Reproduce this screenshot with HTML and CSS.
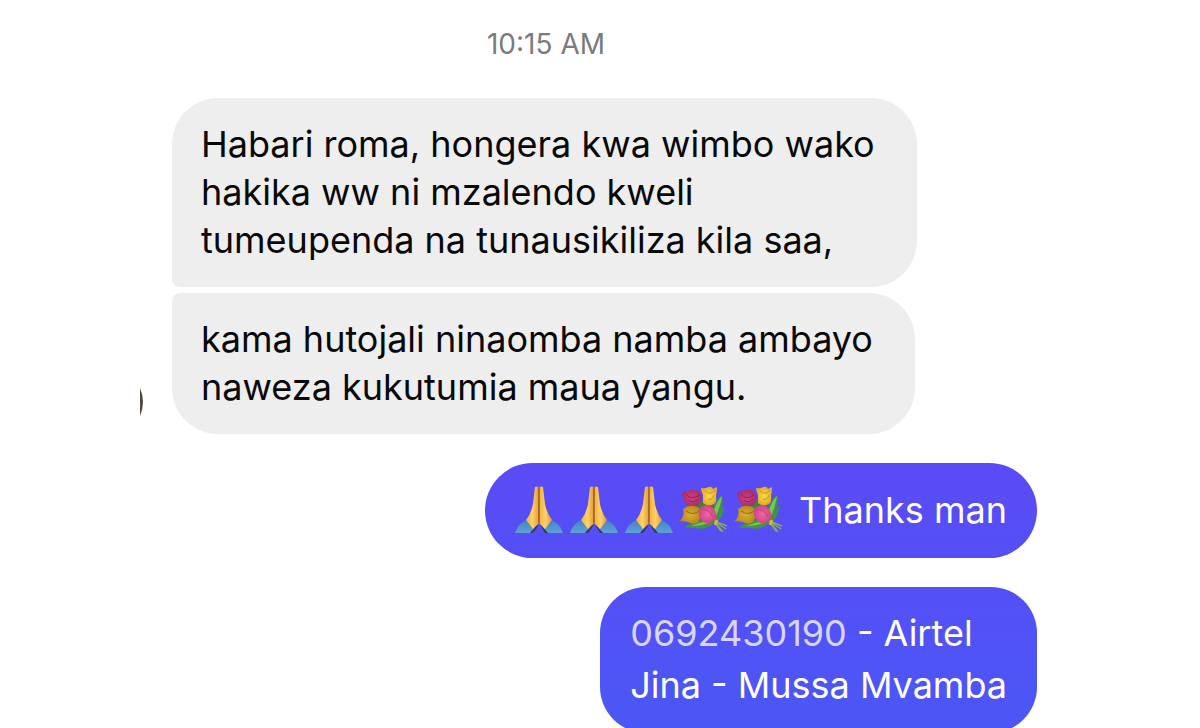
FILE: index.html
```html
<!DOCTYPE html>
<html lang="sw">
<head>
  <meta charset="UTF-8">
  <meta name="viewport" content="width=device-width, initial-scale=1.0">
  <title>Messages</title>
  <link rel="stylesheet" href="styles.css">
</head>
<body>
  <!-- Emoji artwork, reused in the messages -->
  <svg class="defs" aria-hidden="true">
    <defs>
      <linearGradient id="skin" x1="0" x2="1" y1="0" y2="0">
        <stop offset="0" stop-color="#f0ae3e"/>
        <stop offset="0.5" stop-color="#ffd165"/>
        <stop offset="1" stop-color="#e09a38"/>
      </linearGradient>
      <linearGradient id="sleeve" x1="0" x2="0" y1="0" y2="1">
        <stop offset="0" stop-color="#4583c4"/>
        <stop offset="1" stop-color="#5fa0d8"/>
      </linearGradient>
      <radialGradient id="magenta"><stop offset="0" stop-color="#cf4282"/><stop offset="1" stop-color="#a82c6c"/></radialGradient>
      <radialGradient id="pink"><stop offset="0" stop-color="#ec68a4"/><stop offset="1" stop-color="#d14583"/></radialGradient>
      <radialGradient id="yellow"><stop offset="0" stop-color="#fbdc46"/><stop offset="1" stop-color="#e2ac28"/></radialGradient>
      <radialGradient id="gold"><stop offset="0" stop-color="#dfae2c"/><stop offset="1" stop-color="#b88a22"/></radialGradient>
      <symbol id="pray" viewBox="0 0 48 48">
        <path fill="url(#sleeve)" d="M0 47Q3 37 12 34L21 41Q17 44 15 47Z"/>
        <path fill="url(#sleeve)" d="M48 47Q45 37 36 34L27 41Q31 44 33 47Z"/>
        <path fill="#303d69" d="M15 47L21 40L24 39L18 47ZM33 47L27 40L25 39L30 47Z"/>
        <path fill="url(#skin)" d="M20 1Q21 0 24 1V37Q22 39 18 43L11 34Q16 28 18 18Z"/>
        <path fill="url(#skin)" d="M24 1Q27 0 28 1L30 18Q32 28 37 34L30 43Q26 39 24 37Z"/>
        <path fill="none" stroke="#8e5525" stroke-width="1.4" d="M24 1V37"/>
      </symbol>
      <symbol id="bouquet" viewBox="0 0 48 48">
        <path fill="#3f7f3c" d="M14 16L30 15L35 22L36 35L18 37L14 32Z"/>
        <path fill="#439440" d="M32 33Q32 17 42 9Q45 20 36 32ZM34 35Q41 23 44 20Q44 30 36 37ZM31 34Q15 33 4 41Q19 44 32 37ZM34 36Q20 35 16 42Q25 45 34 37Z"/>
        <path fill="#7cc35c" d="M33 32Q34 18 42 10Q40 23 34 34ZM31 35Q20 36 11 40Q22 40 31 36Z"/>
        <path fill="none" stroke="#88ac54" stroke-width="1.5" d="M34 35L47 40M34 35L46 43M34 35L43 46M34 35L41 45"/>
        <path fill="none" stroke="#d9b94c" stroke-width="2.5" d="M37 34L35 39"/>
        <path fill="url(#magenta)" d="M2 8Q4 4 8 5Q11 2 15 4Q21 5 21 9Q23 16 17 20Q11 23 6 18Q4 15 2 8Z"/>
        <path fill="none" stroke="#8b2359" d="M6 8Q11 15 19 9M9 14Q13 18 18 13"/>
        <path fill="url(#yellow)" d="M21 2Q26 3 28 1Q32 0 33 3L37 1Q37 7 36 10Q37 16 34 18Q28 21 23 17L23 9Q21 5 21 2Z"/>
        <path fill="none" stroke="#c99624" d="M25 5Q30 10 35 4M28 13Q32 15 34 9"/>
        <path fill="url(#gold)" d="M3 23Q8 19 13 20Q19 20 21 25Q21 32 18 36Q14 39 8 36L0 35Q5 30 3 23Z"/>
        <path fill="none" stroke="#8f6b1c" d="M6 25Q13 30 19 25"/>
        <path fill="url(#pink)" d="M19 23Q25 17 31 20Q38 26 36 33Q31 38 25 37Q17 32 19 23Z"/>
        <path fill="none" stroke="#c04079" d="M21 24Q29 22 33 31"/>
      </symbol>
    </defs>
  </svg>

  <main class="chat">
    <time class="time" datetime="10:15">10:15 AM</time>

    <section class="received">
      <svg class="avatar" viewBox="0 0 4 28" aria-hidden="true">
        <path fill="#51483f" d="M0 0Q6 14 0 28Z"/>
      </svg>
      <div class="stack">
        <p class="bubble first">Habari roma, hongera kwa wimbo wako<br>hakika ww ni mzalendo kweli<br>tumeupenda na tunausikiliza kila saa,</p>
        <p class="bubble last">kama hutojali ninaomba namba ambayo<br>naweza kukutumia maua yangu.</p>
      </div>
    </section>

    <section class="sent">
      <p class="bubble thanks">
        <span class="emojis" role="img" aria-label="Folded hands and bouquets">
          <svg class="emoji"><use href="#pray"/></svg>
          <svg class="emoji"><use href="#pray"/></svg>
          <svg class="emoji"><use href="#pray"/></svg>
          <svg class="emoji"><use href="#bouquet"/></svg>
          <svg class="emoji"><use href="#bouquet"/></svg>
        </span>
        <span>Thanks man</span>
      </p>
      <p class="bubble contact"><a href="tel:0692430190">0692430190</a> - Airtel<br>Jina - Mussa Mvamba</p>
    </section>
  </main>
</body>
</html>
```
FILE: styles.css
```css
html {
  scrollbar-width: none;
}
body {
  margin: 0;
  background: #fff;
  color: #080808;
  font-family: Inter, "Liberation Sans", sans-serif;
  font-size: 36px;
  line-height: 48px;
}
.defs {
  position: absolute;
  width: 0;
  height: 0;
}
.chat {
  padding: 26px 163px 0 140px;
}
.time {
  display: block;
  margin-right: 85px;
  color: #7b7b7b;
  font-size: 28px;
  line-height: 36px;
  text-align: center;
}
.received {
  display: flex;
  align-items: flex-end;
  gap: 28px;
  margin-top: 36px;
}
.avatar {
  width: 4px;
  height: 28px;
  margin-bottom: 18px;
}
.stack {
  display: flex;
  flex-direction: column;
  align-items: flex-start;
  gap: 6px;
}
.bubble {
  margin: 0;
  padding: 22px 42px 23px 29px;
  border-radius: 46px;
  background: #eee;
}
.first {
  border-bottom-left-radius: 8px;
}
.last {
  border-top-left-radius: 8px;
}
.sent {
  display: flex;
  flex-direction: column;
  align-items: flex-end;
  gap: 29px;
  margin-top: 29px;
}
.sent .bubble {
  padding: 20px 30px 22px;
  background: linear-gradient(#5b4af5 62%, #4b57f5) fixed;
  color: #fff;
}
.sent .thanks {
  display: flex;
  gap: 16px;
  padding: 23px 30px 24px;
  border-radius: 48px;
}
.emojis {
  display: flex;
  gap: 7px;
}
.emoji {
  width: 48px;
  height: 48px;
}
.contact {
  line-height: 52px;
}
.contact a {
  color: #d8d5ff;
  text-decoration: none;
}
```
